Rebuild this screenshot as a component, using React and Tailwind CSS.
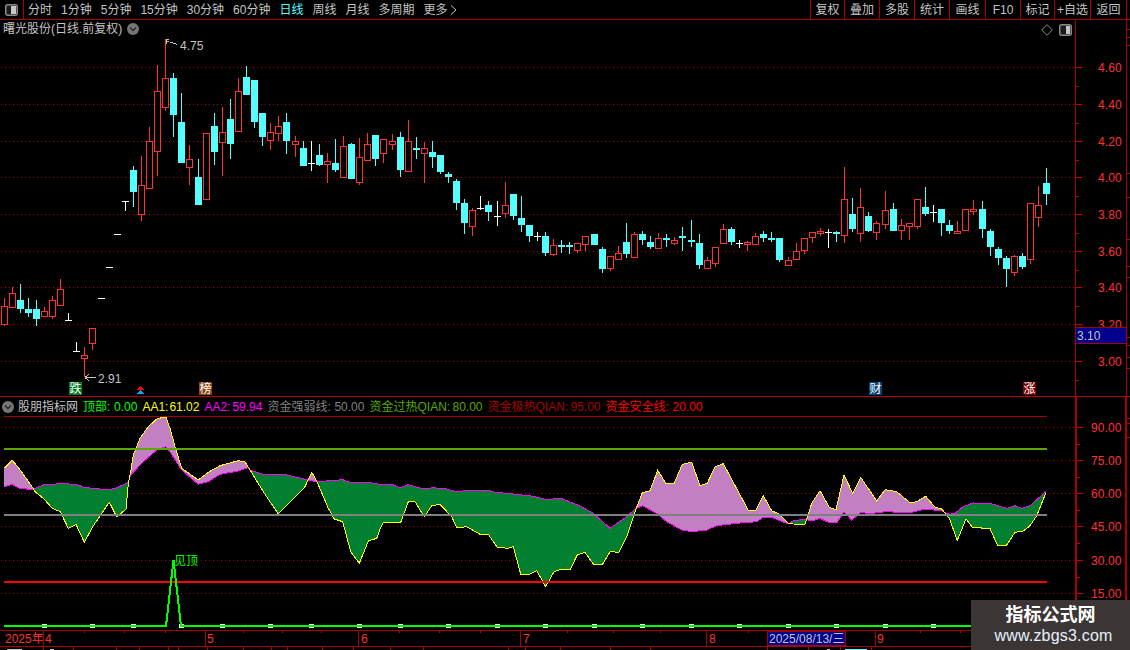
const RED = '#ff3232'
const LINE = '#a80000'
const CYAN = '#54ffff'

const menu = ['分时', '1分钟', '5分钟', '15分钟', '30分钟', '60分钟', '日线', '周线', '月线', '多周期']
const tools = [
  ['复权', 'w-[34px]'],
  ['叠加', 'w-[35px]'],
  ['多股', 'w-[35px]'],
  ['统计', 'w-[35px]'],
  ['画线', 'w-[36px]'],
  ['F10', 'w-[35px]'],
  ['标记', 'w-[34px]'],
  ['+自选', 'w-[36px]'],
  ['返回', 'w-[36px]'],
]

// [name, name column, value, colour]
const legend = [
  ['顶部:', 'w-[31px]', '0.00', 'text-[#00ff00]'],
  ['AA1:', 'w-[27px]', '61.02', 'text-[#ffff00]'],
  ['AA2:', 'w-[28px]', '59.94', 'text-[#ff00ff]'],
  ['资金强弱线:', 'w-[67px]', '50.00', 'text-[#808080]'],
  ['资金过热QIAN:', 'w-[83px]', '80.00', 'text-[#5aa800]'],
  ['资金极热QIAN:', 'w-[83px]', '95.00', 'text-[#a80000]'],
  ['资金安全线:', 'w-[67px]', '20.00', 'text-[#ff0000]'],
]

// [x, wick top, body top, body bottom, wick bottom, kind]
const candles = [
  [4, 298, 306, 324, 326, 'r'], [12, 287, 293, 307, 307, 'r'], [20, 284, 300, 309, 313, 'c'], [28, 298, 309, 313, 317, 'c'],
  [36, 300, 309, 319, 326, 'c'], [44, 307, 311, 316, 317, 'r'], [52, 296, 300, 316, 319, 'r'], [60, 279, 289, 305, 305, 'r'],
  [68, 313, 320, 320, 320, 'w'], [76, 342, 351, 351, 351, 'w'], [84, 347, 355, 358, 377, 'r'], [92, 328, 328, 343, 350, 'r'],
  [101, 298, 298, 298, 298, 'w'], [109, 267, 267, 267, 267, 'w'], [117, 234, 234, 234, 234, 'w'], [125, 201, 201, 201, 210, 'w'],
  [133, 166, 170, 192, 207, 'c'], [141, 156, 185, 214, 221, 'r'], [149, 127, 141, 188, 188, 'r'], [157, 65, 91, 151, 176, 'r'],
  [165, 39, 78, 107, 111, 'r'], [173, 73, 78, 115, 137, 'c'], [181, 93, 122, 163, 163, 'c'], [189, 145, 159, 167, 185, 'r'],
  [198, 159, 177, 205, 205, 'c'], [206, 133, 133, 199, 199, 'r'], [214, 113, 126, 152, 165, 'c'], [222, 107, 132, 142, 176, 'r'],
  [230, 99, 119, 144, 159, 'c'], [238, 78, 91, 131, 131, 'r'], [246, 66, 77, 95, 95, 'c'], [254, 80, 80, 122, 128, 'c'],
  [262, 113, 113, 137, 146, 'c'], [270, 123, 132, 140, 150, 'r'], [278, 116, 126, 133, 141, 'r'], [286, 113, 122, 141, 154, 'c'],
  [295, 136, 141, 144, 157, 'r'], [303, 141, 148, 166, 166, 'c'], [311, 141, 163, 163, 170, 'w'], [319, 144, 155, 165, 166, 'c'],
  [327, 153, 161, 164, 183, 'r'], [335, 139, 163, 170, 172, 'c'], [343, 136, 146, 177, 177, 'r'], [351, 143, 144, 179, 179, 'c'],
  [359, 138, 157, 182, 185, 'r'], [367, 133, 144, 160, 160, 'r'], [375, 135, 135, 159, 166, 'c'], [383, 139, 139, 153, 163, 'r'],
  [392, 134, 141, 144, 150, 'r'], [400, 132, 137, 170, 177, 'c'], [408, 120, 141, 171, 172, 'r'], [416, 137, 148, 150, 159, 'c'],
  [424, 142, 148, 153, 183, 'r'], [432, 141, 152, 157, 168, 'c'], [440, 155, 155, 172, 174, 'c'], [448, 172, 174, 177, 183, 'c'],
  [456, 179, 181, 203, 210, 'c'], [464, 199, 203, 223, 234, 'c'], [472, 208, 210, 226, 236, 'r'], [480, 196, 208, 208, 209, 'w'],
  [488, 201, 205, 212, 221, 'c'], [497, 201, 216, 216, 225, 'w'], [505, 182, 205, 213, 218, 'r'], [513, 194, 194, 216, 220, 'c'],
  [521, 196, 218, 225, 232, 'c'], [529, 225, 225, 236, 242, 'c'], [537, 232, 236, 236, 240, 'w'], [545, 232, 236, 253, 256, 'c'],
  [553, 239, 245, 254, 256, 'r'], [561, 240, 245, 247, 253, 'c'], [569, 242, 245, 247, 254, 'c'], [577, 243, 243, 250, 253, 'r'],
  [585, 236, 236, 244, 251, 'r'], [594, 234, 234, 245, 245, 'c'], [602, 247, 249, 269, 273, 'c'], [610, 256, 256, 268, 271, 'r'],
  [618, 246, 253, 259, 260, 'r'], [626, 223, 242, 254, 258, 'c'], [634, 232, 234, 257, 257, 'r'], [642, 231, 234, 240, 245, 'c'],
  [650, 236, 242, 247, 249, 'c'], [658, 233, 238, 248, 249, 'r'], [666, 234, 238, 240, 247, 'c'], [674, 237, 240, 243, 245, 'r'],
  [682, 227, 236, 238, 251, 'c'], [691, 220, 240, 242, 247, 'c'], [699, 234, 243, 265, 269, 'c'], [707, 257, 260, 268, 269, 'r'],
  [715, 247, 247, 263, 267, 'r'], [723, 224, 229, 243, 243, 'r'], [731, 227, 229, 242, 245, 'c'], [739, 240, 243, 243, 247, 'w'],
  [747, 241, 242, 244, 251, 'r'], [755, 233, 236, 244, 244, 'r'], [763, 231, 234, 238, 242, 'c'], [771, 232, 238, 240, 242, 'c'],
  [779, 238, 238, 260, 262, 'c'], [788, 257, 260, 265, 265, 'r'], [796, 243, 251, 259, 259, 'r'], [804, 238, 238, 250, 254, 'r'],
  [812, 232, 232, 237, 243, 'r'], [820, 228, 231, 233, 236, 'r'], [828, 229, 232, 232, 247, 'w'], [836, 231, 232, 234, 242, 'c'],
  [844, 167, 199, 235, 243, 'r'], [852, 198, 214, 229, 232, 'c'], [860, 188, 207, 233, 242, 'r'], [868, 212, 216, 231, 232, 'c'],
  [876, 221, 223, 232, 240, 'r'], [885, 191, 210, 224, 229, 'r'], [893, 203, 209, 231, 231, 'c'], [901, 219, 225, 230, 240, 'r'],
  [909, 223, 223, 226, 240, 'r'], [917, 199, 199, 226, 229, 'r'], [925, 187, 207, 214, 216, 'c'], [933, 205, 212, 212, 221, 'w'],
  [941, 209, 209, 223, 236, 'c'], [949, 220, 225, 231, 234, 'c'], [957, 221, 231, 233, 233, 'r'], [965, 209, 209, 230, 230, 'r'],
  [973, 200, 209, 211, 215, 'r'], [982, 201, 209, 229, 238, 'c'], [990, 229, 231, 247, 256, 'c'], [998, 247, 249, 258, 265, 'c'],
  [1006, 256, 258, 269, 287, 'c'], [1014, 255, 256, 272, 276, 'r'], [1022, 253, 256, 267, 269, 'c'], [1030, 203, 203, 259, 264, 'r'],
  [1038, 186, 205, 217, 227, 'r'], [1046, 168, 183, 194, 205, 'c'],
]

const priceGrid = [67.5, 104.5, 141.5, 177.5, 214.5, 251.5, 287.5, 324.5, 361.5]
const priceLabels = ['4.60', '4.40', '4.20', '4.00', '3.80', '3.60', '3.40', '3.20', '3.00']
const indexGrid = [427.5, 460.5, 493.5, 526.5, 560.5, 593.5]
const indexLabels = ['90.00', '75.00', '60.00', '45.00', '30.00', '15.00']

// traced from the reference in 3x crops: x0 + x/3, 395 + y/3
const trace = (x0, pts) => pts.map(([x, y]) => [x0 + x / 3, 395 + y / 3])

const aa1 = [
  ...trace(0, [[12, 220], [37, 196], [60, 224], [98, 278], [105, 290], [130, 310], [157, 340], [181, 350], [205, 400], [228, 388], [253, 442], [278, 395], [328, 322], [350, 365], [378, 343], [385, 265], [392, 230], [400, 180], [420, 130], [445, 95], [470, 72], [497, 65], [510, 100], [525, 155], [545, 220], [595, 255], [625, 232], [660, 212], [715, 197], [735, 200], [750, 225], [790, 290], [835, 357], [915, 275], [935, 232], [950, 258], [985, 340], [1003, 372], [1028, 380], [1052, 470], [1078, 505], [1105, 438], [1130, 430]]),
  ...trace(380, [[0, 403], [10, 382], [62, 382], [85, 320], [105, 320], [133, 365], [155, 332], [180, 328], [215, 365], [230, 398], [260, 395], [300, 418], [325, 418], [352, 457], [385, 460], [400, 455], [422, 537], [450, 537], [470, 527], [497, 575], [522, 530], [540, 524], [570, 524], [592, 480], [615, 472], [640, 507], [668, 507], [690, 470], [717, 472], [740, 425], [765, 350], [787, 293], [810, 287], [833, 226], [858, 266], [882, 266], [907, 208], [935, 202], [960, 272], [982, 265], [1005, 215], [1030, 206], [1105, 346], [1128, 346]]),
  ...trace(750, [[40, 302], [65, 347], [85, 356], [115, 385], [130, 387], [165, 388], [185, 325], [210, 287], [238, 337], [258, 344], [282, 240], [308, 295], [332, 247], [380, 318], [405, 284], [440, 290], [480, 323], [500, 320], [527, 304], [555, 337], [575, 342], [598, 370], [622, 436], [648, 372], [668, 398], [720, 400], [742, 450], [770, 450], [795, 412], [820, 408], [840, 392], [860, 362], [887, 295]]),
]

const aa2 = [
  ...trace(0, [[12, 276], [37, 268], [60, 281], [98, 283], [130, 270], [180, 266], [230, 268], [250, 277], [320, 284], [345, 281], [385, 262], [392, 240], [430, 200], [470, 165], [497, 155], [510, 170], [545, 225], [595, 268], [625, 260], [660, 238], [715, 228], [745, 218], [750, 225], [790, 238], [860, 240], [925, 255], [950, 260], [1028, 254], [1050, 262], [1105, 262]]),
  ...trace(380, [[0, 268], [35, 268], [60, 278], [85, 269], [130, 282], [160, 278], [200, 282], [225, 289], [275, 287], [325, 285], [345, 292], [400, 297], [460, 304], [495, 313], [545, 311], [600, 333], [640, 355], [690, 400], [740, 365], [765, 342], [787, 332], [830, 355], [860, 380], [905, 405], [935, 410], [980, 405], [1010, 392], [1070, 385], [1130, 380]]),
  ...trace(750, [[40, 367], [65, 367], [85, 375], [115, 387], [130, 378], [165, 372], [185, 378], [210, 370], [235, 382], [262, 382], [282, 350], [305, 376], [332, 352], [360, 356], [405, 350], [480, 353], [527, 342], [575, 348], [598, 358], [615, 355], [640, 335], [670, 324], [720, 325], [770, 340], [795, 332], [815, 340], [840, 332], [887, 290]]),
]

function yAt(pts, x) {
  for (let i = 1; i < pts.length; i++) {
    if (x <= pts[i][0]) {
      const [x0, y0] = pts[i - 1]
      const [x1, y1] = pts[i]
      return y0 + ((y1 - y0) * (x - x0)) / (x1 - x0 || 1)
    }
  }
  return pts[pts.length - 1][1]
}

function areaPaths() {
  let pink = ''
  let green = ''
  for (let x = 4; x <= 1045; x++) {
    const y1 = yAt(aa1, x + 0.5)
    const y2 = yAt(aa2, x + 0.5)
    const seg = `M${x + 0.5} ${y1.toFixed(1)}V${y2.toFixed(1)}`
    if (y1 < y2) pink += seg
    else green += seg
  }
  return { pink, green }
}

const toPoints = (pts) => pts.map(([x, y]) => `${x.toFixed(1)},${y.toFixed(1)}`).join(' ')

const squares = [44, 92, 133, 181, 222, 270, 311, 359, 400, 448, 497, 545, 594, 642, 691, 739, 788, 836, 885, 933]
const topTicks = [84, 124, 165, 243, 282, 321, 399, 439, 480, 567, 613, 660, 748, 790, 830, 920, 960, 1000, 1040]
const lowTicks = [43, 73, 116, 139, 168, 178, 207, 243, 271, 287, 322, 353, 390, 423, 508, 525, 560, 610, 650, 767, 808, 840, 871]
const priceStrip = [29, 37, 45, 173, 197, 239, 266, 277, 337, 345, 357, 368]
const indexStrip = [418, 423, 437]

function Candle({ c }) {
  const [x, wt, bt, bb, wb, kind] = c
  if (kind === 'w') {
    return (
      <g fill="#ffffff">
        <rect x={x} y={wt} width="1" height={wb - wt + 1} />
        <rect x={x - 3} y={bt} width="7" height="1" />
      </g>
    )
  }
  if (kind === 'c') {
    return (
      <g fill={CYAN}>
        <rect x={x} y={wt} width="1" height={wb - wt} />
        <rect x={x - 3} y={bt} width="7" height={Math.max(bb - bt, 2)} />
      </g>
    )
  }
  return (
    <g>
      <rect x={x} y={wt} width="1" height={wb - wt} fill={RED} />
      <rect x={x - 2.5} y={bt + 0.5} width="6" height={bb - bt} fill="#000" stroke={RED} />
    </g>
  )
}

function PanelIcon({ right }) {
  return (
    <svg width="13" height="12" viewBox="0 0 13 12" className="block">
      <rect x="0.75" y="0.75" width="11.5" height="10.5" rx="2" fill="#1c1c1c" stroke="#8a8a8a" strokeWidth="1.5" />
      <rect x={right ? 7 : 6} y="2" width={right ? 4 : 5} height="8" fill="#c8c8c8" />
    </svg>
  )
}

function Chevron() {
  return (
    <svg width="12" height="12" viewBox="0 0 12 12" className="block shrink-0">
      <circle cx="6" cy="6" r="6" fill="#757575" />
      <path d="M3 4.5 6 7.5 9 4.5" fill="none" stroke="#2a2a2a" strokeWidth="1.5" />
    </svg>
  )
}

function Badge({ text, bg, className }) {
  return (
    <span className={`absolute top-[362px] w-[13px] h-[13px] flex items-center justify-center text-[12px] leading-none text-white ${bg} ${className}`}>
      {text}
    </span>
  )
}

function TopBar() {
  return (
    <div className="flex h-[20px] shrink-0 border-b border-[#a80000] text-[12px] text-[#c4c4c4]">
      <div className="w-[24px] flex items-center justify-center border-r border-[#a80000]">
        <PanelIcon />
      </div>
      <div className="flex items-center gap-[9px] pl-[4px]">
        {menu.map((m) => (
          <span key={m} className={m === '日线' ? 'text-[#54ffff]' : ''}>{m}</span>
        ))}
        <span className="flex items-center gap-[2px]">
          更多
          <svg width="7" height="10" viewBox="0 0 7 10"><path d="M1 .5 6 5 1 9.5" fill="none" stroke="#c4c4c4" /></svg>
        </span>
      </div>
      <div className="ml-auto flex w-[320px]">
        {tools.map(([t, w]) => (
          <div key={t} className={`${w} flex items-center justify-center border-l border-[#a80000]`}>{t}</div>
        ))}
        <div className="flex-1 border-l border-[#a80000]" />
      </div>
    </div>
  )
}

function PriceChart() {
  return (
    <div className="relative w-[1075px] shrink-0">
      <svg width="1075" height="376" viewBox="0 20 1075 376" shapeRendering="crispEdges" className="block">
        {priceGrid.map((y) => (
          <line key={y} x1="1" x2="1075" y1={y} y2={y} stroke="#b00000" strokeDasharray="1 3" />
        ))}
        {candles.map((c) => <Candle key={c[0]} c={c} />)}
        <g fill="none" stroke="#c4c4c4">
          <path d="M166 39.5H169M166 39.5V44M166 41.5H169M170 42 177 44.5" />
          <path d="M85 377.5H96M85 377.5 89 374.5M85 377.5 89 380.5" />
        </g>
        <text x="180" y="50" fontSize="12" fill="#c4c4c4">4.75</text>
        <text x="98" y="383" fontSize="12" fill="#c4c4c4">2.91</text>
        <path d="M140.5 386 144 390H137Z" fill="#ff0000" />
        <path d="M140.5 390 144 394H137Z" fill="#00a8ff" />
      </svg>
      <div className="absolute left-[3px] top-0 h-[18px] flex items-center gap-[5px] text-[12px] text-[#c4c4c4]">
        <span>曙光股份(日线.前复权)</span>
        <Chevron />
      </div>
      <div className="absolute right-[3px] top-[4px] flex items-center gap-[6px]">
        <svg width="12" height="12" viewBox="0 0 12 12"><path d="M6 .7 11.3 6 6 11.3 .7 6Z" fill="none" stroke="#8a8a8a" /></svg>
        <PanelIcon right />
      </div>
      <Badge text="跌" bg="bg-[#007a1e]" className="left-[69px]" />
      <Badge text="榜" bg="bg-[#8a4513]" className="left-[199px]" />
      <Badge text="财" bg="bg-[#00457d]" className="left-[869px]" />
      <Badge text="涨" bg="bg-[#7d0000]" className="left-[1023px]" />
    </div>
  )
}

function AxisTicks({ rows, labels, width, height, top, labelX }) {
  return (
    <svg width={width} height={height} viewBox={`0 ${top} ${width} ${height}`} shapeRendering="crispEdges" className="block">
      {rows.map((y, i) => (
        <g key={y}>
          <rect x="0" y={y - 0.5} width="6" height="1" fill="#c00000" />
          <rect x="0" y={y + (rows[1] - rows[0]) / 2 - 0.5} width="3" height="1" fill="#c00000" />
          <text x={labelX} y={y + 4} fontSize="12" fill={RED} letterSpacing=".1" style={{ shapeRendering: 'auto' }}>{labels[i]}</text>
        </g>
      ))}
    </svg>
  )
}

function StripTicks({ ticks, height, top }) {
  return (
    <svg width="3" height={height} viewBox={`0 ${top} 3 ${height}`} shapeRendering="crispEdges" className="block shrink-0">
      {ticks.map((y) => <rect key={y} x="0" y={y} width="3" height="1" fill="#a80000" />)}
    </svg>
  )
}

function IndicatorHeader() {
  return (
    <div className="flex items-center h-[19px] pl-[2px] text-[12px] whitespace-nowrap">
      <Chevron />
      <span className="text-[#c4c4c4] ml-[4px] mr-[5px]">股朋指标网</span>
      <div className="flex gap-[5px]">
        {legend.map(([name, w, value, color]) => (
          <span key={name} className={`flex ${color}`}>
            <span className={w}>{name}</span>
            <span>{value}</span>
          </span>
        ))}
      </div>
    </div>
  )
}

function IndicatorChart() {
  const { pink, green } = areaPaths()
  return (
    <svg width="1075" height="214" viewBox="0 416 1075 214" shapeRendering="crispEdges" className="block">
      {indexGrid.map((y) => (
        <line key={y} x1="1" x2="1075" y1={y} y2={y} stroke="#b00000" strokeDasharray="1 3" />
      ))}
      <path d={pink} stroke="#c27fc2" fill="none" />
      <path d={green} stroke="#008030" fill="none" />
      <polyline points={toPoints(aa2)} fill="none" stroke="#ff00ff" />
      <polyline points={toPoints(aa1)} fill="none" stroke="#ffff00" />
      <line x1="4" x2="1047" y1="416.5" y2="416.5" stroke="#a80000" />
      <line x1="4" x2="1047" y1="449" y2="449" stroke="#5aa800" strokeWidth="2" />
      <line x1="4" x2="1047" y1="515" y2="515" stroke="#808080" strokeWidth="2" />
      <line x1="4" x2="1047" y1="582" y2="582" stroke="#ff0000" strokeWidth="2" />
      {squares.map((x) => (
        <rect key={x} x={x - 2} y="624" width="5" height="4" fill="#ffffff" />
      ))}
      <polyline points="4,626 166,626 173.5,560 181,626 1075,626" fill="none" stroke="#00ff00" strokeWidth="2" />
      <text x="174" y="565" fontSize="12" fill="#00ff00">见顶</text>
    </svg>
  )
}

function DateRow() {
  return (
    <svg width="1075" height="15" viewBox="0 631 1075 15" className="block" fontSize="12" fill={RED}>
      <g shapeRendering="crispEdges">
        {topTicks.map((x) => <rect key={x} x={x} y="631" width="1" height="2" fill="#c00000" />)}
        {[43, 205, 358, 520, 706, 875].map((x) => <rect key={x} x={x} y="631" width="1" height="15" fill="#a80000" />)}
        <rect x="767.5" y="631.5" width="78" height="14" fill="#00008c" stroke="#a80000" />
      </g>
      <text x="5" y="643">2025年</text>
      <text x="45" y="643">4</text>
      <text x="207" y="643">5</text>
      <text x="361" y="643">6</text>
      <text x="523" y="643">7</text>
      <text x="709" y="643">8</text>
      <text x="769" y="643" fill="#c4c4c4">2025/08/13/三</text>
      <text x="877" y="643">9</text>
    </svg>
  )
}

function Watermark() {
  return (
    <div className="absolute right-0 bottom-0 w-[159px] h-[50px] bg-[#3c3535] flex flex-col items-center text-white">
      <span className="text-[18px] leading-[22px] mt-[4px] font-bold">指标公式网</span>
      <span className="text-[16px] leading-[20px] ml-[6px] tracking-[.2px] text-[#e6f2ff]">www.zbgs3.com</span>
    </div>
  )
}

export default function App() {
  return (
    <div className="relative w-[1130px] h-[650px] overflow-hidden bg-black flex flex-col font-['Liberation_Sans','Noto_Sans_CJK_SC',sans-serif]">
      <TopBar />
      <div className="flex h-[376px] shrink-0">
        <PriceChart />
        <div className="relative w-[52px] shrink-0 border-x border-[#a80000]">
          <AxisTicks rows={priceGrid} labels={priceLabels} width={50} height={376} top={20} labelX={22} />
          <div className="absolute left-0 right-0 top-[307px] h-[17px] bg-[#00008c] border-y border-[#a80000] pl-[1px] flex items-center text-[12px] text-[#c4c4c4]">3.10</div>
        </div>
        <StripTicks ticks={priceStrip} height={376} top={20} />
      </div>
      <div className="flex flex-1 border-t border-[#b80000]">
        <div className="w-[1075px] shrink-0 flex flex-col">
          <IndicatorHeader />
          <IndicatorChart />
          <div className="border-y border-[#a80000]">
            <DateRow />
          </div>
          <svg width="1075" height="3" shapeRendering="crispEdges" className="block">
            {lowTicks.map((x) => <rect key={x} x={x} y="0" width="1" height="3" fill="#a80000" />)}
            <rect x="7" y="2" width="15" height="1" fill="#c4c4c4" />
            <rect x="50" y="2" width="4" height="1" fill="#c4c4c4" />
            <rect x="827" y="2" width="3" height="1" fill="#c4c4c4" />
            <rect x="845" y="2" width="22" height="1" fill="#54ffff" />
          </svg>
        </div>
        <div className="w-[52px] shrink-0 border-x-2 border-[#a80000]">
          <AxisTicks rows={indexGrid} labels={indexLabels} width={48} height={253} top={397} labelX={14} />
        </div>
        <StripTicks ticks={indexStrip} height={253} top={397} />
      </div>
      <Watermark />
    </div>
  )
}
